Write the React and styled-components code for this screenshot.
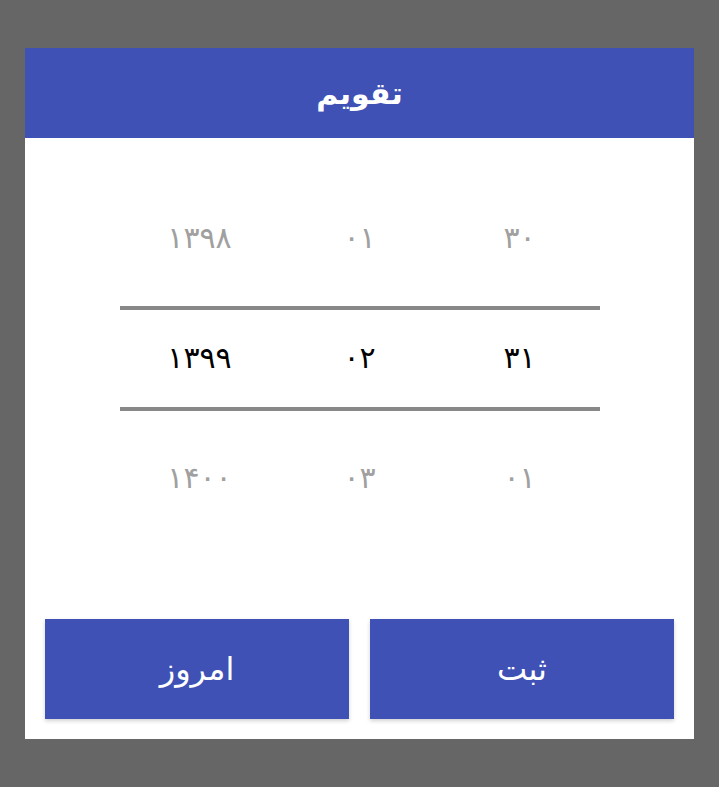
import React from 'react';
import styled, { createGlobalStyle } from 'styled-components';

// #region constants
const rows = [
  { day: '۳۰', month: '۰۱', year: '۱۳۹۸', active: false },
  { day: '۳۱', month: '۰۲', year: '۱۳۹۹', active: true },
  { day: '۰۱', month: '۰۳', year: '۱۴۰۰', active: false },
];
// #endregion

// #region styled components
const GlobalStyle = createGlobalStyle`
  html, body {
    margin: 0;
    padding: 0;
    background: #666666;
  }
  body {
    font-family: "DejaVu Sans", "Noto Sans", sans-serif;
  }
`;

const Screen = styled.div`
  height: 787px;
  display: flex;
  align-items: center;
  justify-content: center;
  direction: rtl;
`;

const Dialog = styled.div`
  width: 669px;
  height: 691px;
  background: #ffffff;
  display: flex;
  flex-direction: column;
`;

const Header = styled.div`
  height: 90px;
  background: #3f51b5;
  color: #ffffff;
  display: flex;
  align-items: center;
  justify-content: center;
  font-size: 30px;
  font-weight: bold;
`;

const Body = styled.div`
  flex: 1;
  display: flex;
  flex-direction: column;
  align-items: center;
  padding: 39px 20px 20px;
`;

const Picker = styled.div`
  position: relative;
  width: 480px;
  height: 360px;
  display: flex;
  flex-direction: column;
`;

const Row = styled.div`
  height: 120px;
  display: grid;
  grid-template-columns: repeat(3, 1fr);
  align-items: center;
`;

const Cell = styled.div`
  text-align: center;
  font-size: 30px;
  color: ${props => (props.active ? '#000000' : '#a0a0a0')};
  font-weight: ${props => (props.active ? 500 : 400)};
`;

const Line = styled.div`
  position: absolute;
  left: 0;
  right: 0;
  top: ${props => props.top}px;
  height: 4px;
  background: #888888;
`;

const Actions = styled.div`
  margin-top: auto;
  width: 100%;
  display: grid;
  grid-template-columns: 1fr 1fr;
  gap: 21px;
`;

const ActionButton = styled.button`
  height: 100px;
  border: none;
  background: #3f51b5;
  color: #ffffff;
  font-family: inherit;
  font-size: 32px;
  box-shadow: 0 2px 4px rgba(0, 0, 0, 0.18);
  cursor: pointer;
`;
// #endregion

export default function App() {
  return (
    <>
      <GlobalStyle />
      <Screen>
        <Dialog>
          <Header>تقویم</Header>
          <Body>
            <Picker>
              {rows.map(r => (
                <Row key={r.year}>
                  <Cell active={r.active}>{r.day}</Cell>
                  <Cell active={r.active}>{r.month}</Cell>
                  <Cell active={r.active}>{r.year}</Cell>
                </Row>
              ))}
              <Line top={129} />
              <Line top={230} />
            </Picker>
            <Actions>
              <ActionButton>ثبت</ActionButton>
              <ActionButton>امروز</ActionButton>
            </Actions>
          </Body>
        </Dialog>
      </Screen>
    </>
  );
}
